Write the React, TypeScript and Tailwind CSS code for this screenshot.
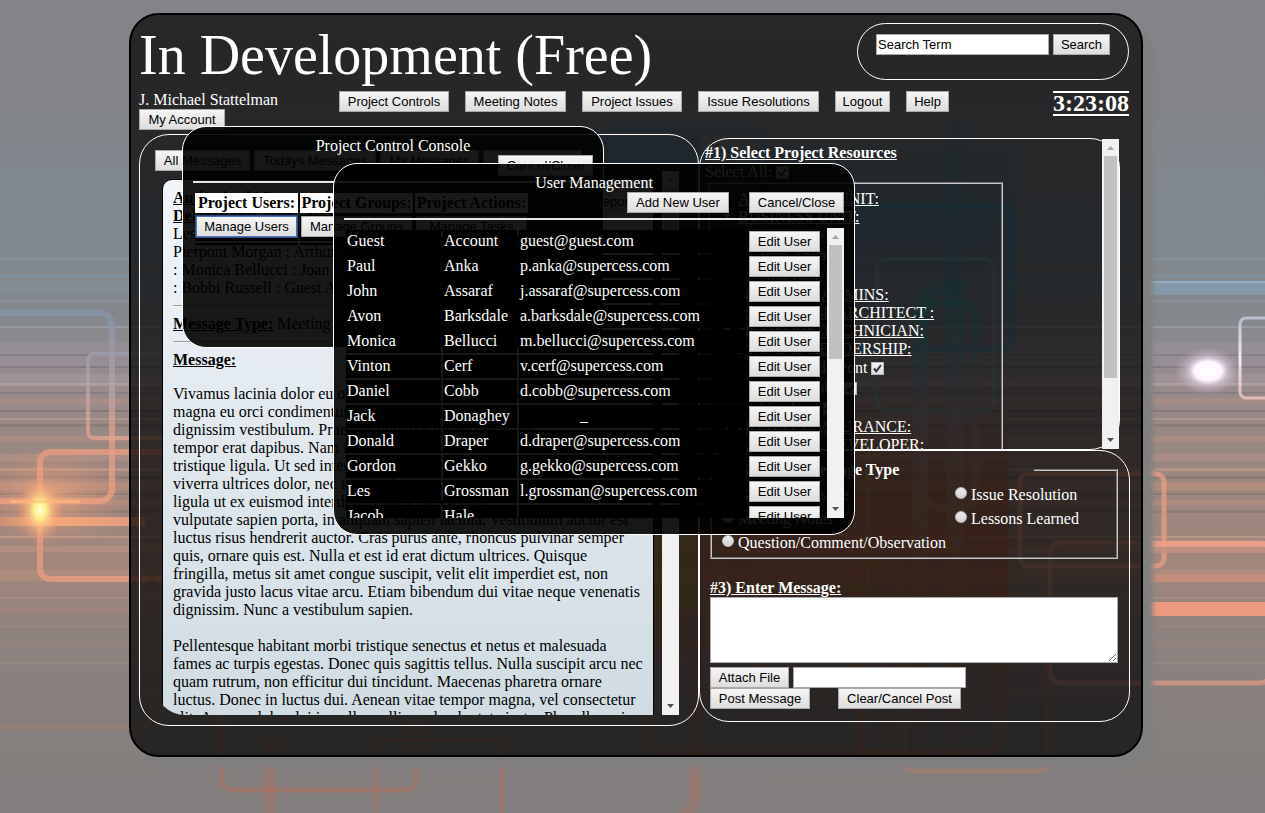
import React from "react";

const users: [string, string, string][] = [
  ["Guest", "Account", "guest@guest.com"],
  ["Paul", "Anka", "p.anka@supercess.com"],
  ["John", "Assaraf", "j.assaraf@supercess.com"],
  ["Avon", "Barksdale", "a.barksdale@supercess.com"],
  ["Monica", "Bellucci", "m.bellucci@supercess.com"],
  ["Vinton", "Cerf", "v.cerf@supercess.com"],
  ["Daniel", "Cobb", "d.cobb@supercess.com"],
  ["Jack", "Donaghey", ""],
  ["Donald", "Draper", "d.draper@supercess.com"],
  ["Gordon", "Gekko", "g.gekko@supercess.com"],
  ["Les", "Grossman", "l.grossman@supercess.com"],
  ["Jacob", "Hale", ""],
];

const nav = [
  { label: "Project Controls", width: "w-[110px]" },
  { label: "Meeting Notes", width: "w-[101px]" },
  { label: "Project Issues", width: "w-[100px]" },
  { label: "Issue Resolutions", width: "w-[121px]" },
  { label: "Logout", width: "w-[55px]" },
  { label: "Help", width: "w-[43px]" },
];

const firstParagraph = `Vivamus lacinia dolor eu odio sollicitudin, vitae aliquam
magna eu orci condimentum, a tempus neque
dignissim vestibulum. Praesent volutpat lorem metus, ut
tempor erat dapibus. Nam id mauris vel nulla
tristique ligula. Ut sed interdum ipsum, vel
viverra ultrices dolor, nec tempus lorem
ligula ut ex euismod interdum. Donec in felis eu
vulputate sapien porta, in aliquam sapien lacinia. Vestibulum auctor est
luctus risus hendrerit auctor. Cras purus ante, rhoncus pulvinar semper
quis, ornare quis est. Nulla et est id erat dictum ultrices. Quisque
fringilla, metus sit amet congue suscipit, velit elit imperdiet est, non
gravida justo lacus vitae arcu. Etiam bibendum dui vitae neque venenatis
dignissim. Nunc a vestibulum sapien.`;

const secondParagraph = `Pellentesque habitant morbi tristique senectus et netus et malesuada
fames ac turpis egestas. Donec quis sagittis tellus. Nulla suscipit arcu nec
quam rutrum, non efficitur dui tincidunt. Maecenas pharetra ornare
luctus. Donec in luctus dui. Aenean vitae tempor magna, vel consectetur
elit. Aenean dolor dui in nulla mollis, sed vulputate justo. Phasellus mi`;

function Btn({
  children,
  className = "",
}: {
  children: React.ReactNode;
  className?: string;
}) {
  return (
    <button
      type="button"
      className={`h-[21px] shrink-0 whitespace-nowrap border border-[#a9a9a9] bg-gradient-to-b from-[#f6f6f6] to-[#dddddd] text-center font-['Liberation_Sans',sans-serif] text-[13px] leading-[19px] text-black ${className}`}
    >
      {children}
    </button>
  );
}

function ScrollBar({ thumb, className = "" }: { thumb: string; className?: string }) {
  return (
    <div
      aria-hidden="true"
      className={`flex w-[17px] shrink-0 flex-col items-center bg-[#f1f1f1] ${className}`}
    >
      <svg width="17" height="17" viewBox="0 0 17 17">
        <path d="M5 11 L8.5 7 L12 11 Z" fill="#a3a3a3" />
      </svg>
      <div className={`w-[13px] bg-[#c1c1c1] ${thumb}`} />
      <svg width="17" height="17" viewBox="0 0 17 17" className="mt-auto">
        <path d="M5 6 L12 6 L8.5 10 Z" fill="#505050" />
      </svg>
    </div>
  );
}

function Check({ label }: { label: string }) {
  return (
    <label className="flex h-5 items-center gap-1">
      {label}
      <span className="grid">
        <input
          type="checkbox"
          defaultChecked
          className="col-start-1 row-start-1 size-[13px] appearance-none border border-[#b8b8b8] bg-gradient-to-b from-[#f4f4f4] to-[#dcdcdc]"
        />
        <svg
          viewBox="0 0 13 13"
          className="pointer-events-none col-start-1 row-start-1 size-[13px]"
        >
          <path d="M3 6.5 L5.3 9.3 L10 3" fill="none" stroke="#333" strokeWidth="2" />
        </svg>
      </span>
    </label>
  );
}

function Group({ label }: { label: string }) {
  return (
    <div className="relative h-[18px]">
      <span className="absolute -left-4 text-[10px]">▼</span>
      <span className="underline">{label}</span>
    </div>
  );
}

function Radio({ label }: { label: string }) {
  return (
    <label className="flex h-6 items-center gap-1">
      <input
        type="radio"
        name="message-type"
        className="mb-1 size-3 appearance-none rounded-full border border-[#bdbdbd] bg-gradient-to-b from-[#ececec] to-[#d2d2d2]"
      />
      {label}
    </label>
  );
}

function Backdrop() {
  const streaks: [number, number, string, number][] = [
    [258, 2, "#9db4c4", 0.2],
    [274, 4, "#7f9db5", 0.3],
    [280, 14, "#8fa9bd", 0.15],
    [300, 2, "#a9bccb", 0.2],
    [326, 2, "#b4bcc8", 0.35],
    [342, 24, "#a394a0", 0.35],
    [354, 2, "#6d686c", 0.35],
    [366, 2, "#6a6465", 0.35],
    [374, 10, "#b0a0a5", 0.35],
    [383, 3, "#d1b3af", 0.4],
    [392, 2, "#75696a", 0.35],
    [398, 7, "#b58f83", 0.5],
    [410, 2, "#6b6260", 0.4],
    [418, 2, "#d0a99c", 0.4],
    [424, 3, "#786b68", 0.4],
    [436, 6, "#b99282", 0.5],
    [454, 7, "#b9958a", 0.5],
    [468, 3, "#cf9f8b", 0.5],
    [476, 3, "#75655f", 0.35],
    [482, 8, "#c0907c", 0.55],
    [493, 2, "#6f5f58", 0.35],
    [500, 5, "#c2907c", 0.5],
    [510, 3, "#7a6962", 0.35],
    [536, 2, "#d8a793", 0.5],
    [546, 6, "#c09384", 0.6],
    [570, 11, "#b98f7e", 0.5],
    [597, 2, "#bb9280", 0.4],
    [606, 8, "#a8887b", 0.4],
    [626, 2, "#a98d83", 0.35],
    [640, 6, "#a3857d", 0.35],
    [662, 2, "#b09489", 0.3],
    [690, 2, "#99857e", 0.3],
  ];
  return (
    <svg
      aria-hidden="true"
      className="absolute inset-0 size-full"
      viewBox="0 0 1265 813"
      preserveAspectRatio="xMidYMid slice"
    >
      <defs>
        <linearGradient id="sky" x1="0" y1="0" x2="0" y2="1">
          <stop offset="0" stopColor="#858388" />
          <stop offset="0.12" stopColor="#838489" />
          <stop offset="0.27" stopColor="#7f8990" />
          <stop offset="0.39" stopColor="#84888d" />
          <stop offset="0.46" stopColor="#968c90" />
          <stop offset="0.56" stopColor="#9a8780" />
          <stop offset="0.7" stopColor="#a2877d" />
          <stop offset="0.78" stopColor="#8e827e" />
          <stop offset="0.9" stopColor="#86807e" />
          <stop offset="1" stopColor="#837e7e" />
        </linearGradient>
        <linearGradient id="edge" x1="0" y1="316" x2="0" y2="500" gradientUnits="userSpaceOnUse">
          <stop offset="0" stopColor="#8495aa" />
          <stop offset="0.35" stopColor="#b0a2aa" />
          <stop offset="0.6" stopColor="#dca28e" />
          <stop offset="1" stopColor="#f0a184" />
        </linearGradient>
        <linearGradient id="edge2" x1="0" y1="316" x2="0" y2="400" gradientUnits="userSpaceOnUse">
          <stop offset="0" stopColor="#b9c4d6" />
          <stop offset="0.5" stopColor="#fdf5fa" />
          <stop offset="1" stopColor="#e8bdb8" />
        </linearGradient>
        <linearGradient id="column" x1="0" y1="240" x2="0" y2="760" gradientUnits="userSpaceOnUse">
          <stop offset="0" stopColor="#2f90a8" stopOpacity="0.3" />
          <stop offset="0.15" stopColor="#40a8a8" />
          <stop offset="0.35" stopColor="#a890a0" />
          <stop offset="0.55" stopColor="#b89068" />
          <stop offset="0.75" stopColor="#c07048" />
          <stop offset="1" stopColor="#a06850" stopOpacity="0" />
        </linearGradient>
        <linearGradient id="cool" x1="0" y1="0" x2="0" y2="1">
          <stop offset="0" stopColor="#3080b0" stopOpacity="0" />
          <stop offset="0.35" stopColor="#3088b8" stopOpacity="0.25" />
          <stop offset="1" stopColor="#806080" stopOpacity="0" />
        </linearGradient>
        <linearGradient id="warm" x1="0" y1="0" x2="0" y2="1">
          <stop offset="0" stopColor="#c05030" stopOpacity="0" />
          <stop offset="0.3" stopColor="#d05028" stopOpacity="0.4" />
          <stop offset="0.6" stopColor="#d05028" stopOpacity="0.35" />
          <stop offset="0.8" stopColor="#c06040" stopOpacity="0.1" />
          <stop offset="1" stopColor="#c06040" stopOpacity="0" />
        </linearGradient>
        <radialGradient id="glow">
          <stop offset="0" stopColor="#ffb080" stopOpacity="0.6" />
          <stop offset="1" stopColor="#f09070" stopOpacity="0" />
        </radialGradient>
        <radialGradient id="sun">
          <stop offset="0" stopColor="#ffffd8" />
          <stop offset="0.25" stopColor="#fff08c" />
          <stop offset="0.5" stopColor="#ffc080" stopOpacity="0.7" />
          <stop offset="1" stopColor="#f09070" stopOpacity="0" />
        </radialGradient>
        <radialGradient id="star">
          <stop offset="0" stopColor="#ffffff" />
          <stop offset="0.4" stopColor="#fff6ff" />
          <stop offset="0.6" stopColor="#e0cfe4" stopOpacity="0.6" />
          <stop offset="1" stopColor="#c0a8b8" stopOpacity="0" />
        </radialGradient>
        <linearGradient id="bandL">
          <stop offset="0" stopColor="#c98e76" />
          <stop offset="0.3" stopColor="#ffb87c" />
          <stop offset="1" stopColor="#ee9a80" />
        </linearGradient>
      </defs>
      <rect width="1265" height="813" fill="url(#sky)" />
      {streaks.map(([y, h, fill, opacity]) => (
        <rect key={y} y={y} width="1265" height={h} fill={fill} opacity={opacity} />
      ))}
      <rect x="1145" y="281" width="120" height="2" fill="#9bbdd8" opacity="0.7" />
      <rect x="1145" y="283" width="120" height="12" fill="#88a6c0" opacity="0.5" />

      <g fill="none">
        <rect x="-20" y="313" width="132" height="188" rx="12" stroke="url(#edge)" strokeWidth="6" opacity="0.75" />
        <rect x="88" y="354" width="170" height="84" rx="6" stroke="url(#edge)" strokeWidth="4" opacity="0.8" />
        <rect x="40" y="452" width="200" height="127" rx="10" stroke="#e99c81" strokeWidth="6" opacity="0.8" />
        <path
          d="M0 521 H140 Q152 521 152 535 V715 Q150 727 138 727 H0"
          stroke="#c0765a"
          strokeWidth="5"
          opacity="0.25"
        />
        <rect x="1240" y="318" width="50" height="80" rx="6" stroke="url(#edge2)" strokeWidth="3" opacity="0.9" />
        <rect x="1020" y="474" width="144" height="92" rx="8" stroke="#f0a085" strokeWidth="5" opacity="0.7" />
        <rect x="1050" y="543" width="220" height="140" rx="10" stroke="#f0a088" strokeWidth="5" opacity="0.6" />
        <rect x="905" y="600" width="142" height="171" rx="8" stroke="#b97962" strokeWidth="4" opacity="0.5" />
        <rect x="222" y="700" width="194" height="90" rx="10" stroke="#b2705c" strokeWidth="5" opacity="0.5" />
        <rect x="376" y="740" width="126" height="110" rx="6" stroke="#b2705c" strokeWidth="4" opacity="0.5" />
        <path
          d="M270 740 V830 M695 640 V800 Q690 815 680 816"
          stroke="#b36d5a"
          strokeWidth="12"
          opacity="0.35"
        />
        <rect x="650" y="640" width="240" height="112" rx="12" stroke="#b86a50" strokeWidth="5" opacity="0.3" />
      </g>

      <rect x="690" y="130" width="325" height="260" fill="url(#cool)" />
      <rect x="604" y="136" width="96" height="60" fill="#3078a8" opacity="0.3" />
      <rect x="654" y="400" width="355" height="330" fill="url(#warm)" />
      <rect x="654" y="535" width="44" height="75" fill="#90a830" opacity="0.4" />
      <g fill="none">
        <rect x="600" y="130" width="165" height="160" rx="12" stroke="#3f8ab0" strokeWidth="6" opacity="0.3" />
        <rect x="800" y="207" width="213" height="142" rx="12" stroke="#3890b8" strokeWidth="6" opacity="0.4" />
        <rect x="877" y="259" width="117" height="152" rx="10" stroke="#80b0b8" strokeWidth="4" opacity="0.5" />
        <path d="M920 760 V315 Q922 287 950 287 H960" stroke="url(#column)" strokeWidth="14" opacity="0.55" />
        <path d="M955 760 V120" stroke="url(#column)" strokeWidth="18" opacity="0.5" />
        <rect x="925" y="303" width="50" height="205" rx="12" stroke="url(#column)" strokeWidth="8" opacity="0.5" />
        <rect x="755" y="565" width="145" height="110" rx="8" stroke="#c08848" strokeWidth="5" opacity="0.4" />
        <rect x="720" y="440" width="148" height="148" rx="8" stroke="#98a838" strokeWidth="5" opacity="0.35" />
        <rect x="860" y="532" width="138" height="222" rx="12" stroke="#c87048" strokeWidth="10" opacity="0.3" />
      </g>

      <rect y="517" width="145" height="9" fill="url(#bandL)" opacity="0.85" />
      <rect x="1145" y="541" width="120" height="6" fill="#f0a088" opacity="0.8" />
      <rect x="1145" y="547" width="120" height="6" fill="#c08f80" opacity="0.8" />
      <rect x="1145" y="574" width="120" height="8" fill="#c38d7c" />
      <rect x="1145" y="602" width="120" height="14" fill="#eb9a80" />
      <ellipse cx="50" cy="497" rx="80" ry="50" fill="url(#glow)" />
      <ellipse cx="40" cy="510" rx="24" ry="34" fill="url(#sun)" />
      <rect x="10" y="500" width="70" height="3" fill="#ffbe80" opacity="0.6" />
      <ellipse cx="1208" cy="371" rx="34" ry="24" fill="url(#star)" />
    </svg>
  );
}

function MessagePanel() {
  return (
    <section className="h-[592px] rounded-[30px] border border-white pl-[15px] pr-[19px] pt-[15px]">
      <div className="flex gap-1">
        <Btn className="w-[95px]">All Messages</Btn>
        <Btn className="w-[122px]">Todays Messages</Btn>
        <Btn className="w-[99px]">My Messages</Btn>
        <Btn className="w-[99px]">Configure</Btn>
      </div>
      <div className="flex h-[544px]">
        <div className="h-full min-w-0 flex-1 overflow-hidden rounded-bl-[30px] pl-[7px] pr-2 pt-2">
          <article className="relative h-[620px] overflow-hidden rounded-tl-[10px] border border-black bg-gradient-to-b from-[#f1f5f9] to-[#cbd8df] py-[9px] pl-[10px] text-black">
            <div className="whitespace-pre">
              <b className="underline">Authorized Message</b>
              {"\n"}
              <b className="underline">Delegations:</b>
              {
                " John Assaraf\nLes Grossman : Gordon Gekko\nPierpont Morgan : Arthur Jensen\n: Monica Bellucci : Joan Holloway\n: Bobbi Russell : Guest Account"
              }
            </div>
            <Btn className="absolute right-[10px] top-[11px] w-[60px]">Report</Btn>
            <hr className="my-2 mr-[10px] h-[2px] border-b border-t border-b-[#f4f6f8] border-t-[#9a9a9a]" />
            <div>
              <b className="underline">Message Type:</b> Meeting Notes
            </div>
            <hr className="my-2 mr-[10px] h-[2px] border-b border-t border-b-[#f4f6f8] border-t-[#9a9a9a]" />
            <b className="block underline">Message:</b>
            <p className="mt-4 whitespace-pre">{firstParagraph}</p>
            <p className="mt-[18px] whitespace-pre">{secondParagraph}</p>
          </article>
        </div>
        <ScrollBar thumb="h-[140px]" />
      </div>
    </section>
  );
}

function ResourcePanel() {
  return (
    <section className="mr-[10px] flex h-[312px] rounded-[30px] border border-white">
      <div className="h-full min-w-0 flex-1 overflow-hidden pl-[5px] pt-[5px]">
        <h2 className="font-bold underline">#1) Select Project Resources</h2>
        <Check label="Select All:" />
        <fieldset className="ml-[3px] mr-[99px] h-[420px] border-2 border-[#c8c8c8] pl-[28px] pt-[6px] [border-style:groove]">
          <Group label="ASSURANCE UNIT:" />
          <Group label="BUSINESS UNIT:" />
          <div className="pl-[22px]">
            <Check label="Joan Cole" />
            <Check label="Paul Anka" />
            <Check label="Ann Hale" />
          </div>
          <Group label="NETWORK ADMINS:" />
          <Group label="ENTERPRISE ARCHITECT :" />
          <Group label="NETWORK TECHNICIAN:" />
          <Group label="PROJECT LEADERSHIP:" />
          <div className="pl-[21px]">
            <Check label="Pierre S. du Pont" />
            <Check label="Daniel Cobb" />
            <Check label="Vint Cerf" />
          </div>
          <Group label="QUALITY ASSURANCE:" />
          <Group label="SOFTWARE DEVELOPER:" />
        </fieldset>
      </div>
      <ScrollBar thumb="h-[222px]" />
    </section>
  );
}

function PostPanel() {
  return (
    <section className="h-[272px] rounded-[30px] border border-white pl-[10px] pr-[11px] pt-[10px]">
      <fieldset className="h-[98px] border-2 border-[#c8c8c8] px-[10px] [border-style:groove]">
        <legend className="w-[312px] pl-[13px] font-bold">#2) Select Message Type</legend>
        <div className="grid grid-cols-[233px_1fr] pt-1">
          <Radio label="General Message" />
          <Radio label="Issue Resolution" />
          <Radio label="Meeting Notes" />
          <Radio label="Lessons Learned" />
          <Radio label="Question/Comment/Observation" />
        </div>
      </fieldset>
      <label htmlFor="message" className="mt-5 block font-bold underline">
        #3) Enter Message:
      </label>
      <textarea
        id="message"
        className="block h-[66px] w-full border border-[#a9a9a9] bg-white text-black"
      />
      <div className="mt-1 flex gap-1">
        <Btn className="w-[79px]">Attach File</Btn>
        <input
          aria-label="Attached file"
          className="h-[21px] w-[173px] border border-[#a9a9a9] bg-white text-black"
        />
      </div>
      <div className="flex gap-7">
        <Btn className="w-[100px]">Post Message</Btn>
        <Btn className="w-[123px]">Clear/Cancel Post</Btn>
      </div>
    </section>
  );
}

function ProjectConsole() {
  return (
    <div
      role="dialog"
      aria-label="Project Control Console"
      className="absolute left-[51px] top-[111px] h-[222px] w-[422px] rounded-[24px] border border-white bg-black/90 p-[10px]"
    >
      <h2 className="text-center">Project Control Console</h2>
      <div className="flex justify-end">
        <Btn className="w-[95px]">Cancel/Close</Btn>
      </div>
      <hr className="mb-2 mt-[5px] border-t-2 border-[#e6e6e6]" />
      <table className="border-separate border-spacing-[2px] text-black">
        <thead>
          <tr className="h-[20px]">
            <th className="w-[103px] bg-white p-px">Project Users:</th>
            <th className="w-[113px] bg-white p-px">Project Groups:</th>
            <th className="w-[113px] bg-white p-px">Project Actions:</th>
          </tr>
        </thead>
        <tbody>
          <tr>
            <td className="bg-black p-px pb-1">
              <Btn className="block w-full border-[#4f74b8]! ring-1 ring-[#2c4a86]">Manage Users</Btn>
            </td>
            <td className="bg-black p-px pb-1">
              <Btn className="block w-full">Manage Groups</Btn>
            </td>
            <td className="bg-black p-px pb-1">
              <Btn className="block w-full">Manage Tasks</Btn>
            </td>
          </tr>
          <tr>
            <td className="h-[2px] bg-black p-0" />
            <td className="h-[2px] bg-black p-0" />
            <td className="h-[2px] bg-black p-0" />
          </tr>
        </tbody>
      </table>
    </div>
  );
}

function UserManagement() {
  return (
    <div
      role="dialog"
      aria-label="User Management"
      className="absolute left-[202px] top-[148px] h-[372px] w-[522px] rounded-[24px] border border-white bg-black/90 p-[10px]"
    >
      <h2 className="text-center">User Management</h2>
      <div className="flex justify-end gap-5">
        <Btn className="w-[102px]">Add New User</Btn>
        <Btn className="w-[95px]">Cancel/Close</Btn>
      </div>
      <hr className="mb-2 mt-[5px] border-t-2 border-[#e6e6e6]" />
      <div className="flex h-[290px]">
        <div className="h-full min-w-0 flex-1 overflow-hidden">
          <table className="w-[479px] table-fixed border-separate border-spacing-[2px]">
            <colgroup>
              <col className="w-[95px]" />
              <col className="w-[74px]" />
              <col />
              <col className="w-[73px]" />
            </colgroup>
            <tbody>
              {users.map(([first, last, email]) => (
                <tr key={last} className="h-[23px]">
                  <td className="whitespace-nowrap bg-black px-px pb-[2px]">{first}</td>
                  <td className="whitespace-nowrap bg-black px-px pb-[2px]">{last}</td>
                  <td className="whitespace-nowrap bg-black px-px pb-[2px]">
                    {last === "Donaghey" ? <span className="pl-15">_</span> : email}
                  </td>
                  <td className="bg-black p-px">
                    <Btn className="block w-[71px]">Edit User</Btn>
                  </td>
                </tr>
              ))}
            </tbody>
          </table>
        </div>
        <ScrollBar thumb="h-[114px]" />
      </div>
    </div>
  );
}

export default function App() {
  return (
    <div className="relative min-h-screen overflow-hidden bg-[#858388] pb-14 pl-[129px] pr-[122px] pt-[13px] font-['Liberation_Serif',serif] text-base leading-[18px] text-white">
      <Backdrop />
      <main className="relative rounded-[30px] border-2 border-black bg-black/70 pb-[29px] pl-2 pr-[11px] pt-2 shadow-[10px_10px_5px_#808080]">
        <header>
          <div className="flex h-[68px] items-start justify-between">
            <h1 className="pt-px text-[56px] leading-[62px]">In Development (Free)</h1>
            <form className="mr-px flex h-[57px] w-[272px] gap-1 rounded-[30px] border border-white pl-[18px] pt-[10px]">
              <input
                aria-label="Search Term"
                defaultValue="Search Term"
                className="h-[21px] w-[173px] border border-[#a9a9a9] bg-white px-px font-['Liberation_Sans',sans-serif] text-[13px] text-black"
              />
              <Btn className="w-[57px]">Search</Btn>
            </form>
          </div>
          <div className="flex items-start">
            <div className="w-[200px]">
              <div>J. Michael Stattelman</div>
              <Btn className="block w-[86px]">My Account</Btn>
            </div>
            <nav className="flex gap-4">
              {nav.map((item) => (
                <Btn key={item.label} className={item.width}>
                  {item.label}
                </Btn>
              ))}
            </nav>
            <time className="ml-auto mr-px border-y-2 border-white text-2xl font-bold leading-[21px]">
              3:23:08
            </time>
          </div>
        </header>
        <div className="mt-1 grid grid-cols-[560fr_431fr]">
          <MessagePanel />
          <div className="pt-1">
            <ResourcePanel />
            <PostPanel />
          </div>
        </div>
        <ProjectConsole />
        <UserManagement />
      </main>
    </div>
  );
}
